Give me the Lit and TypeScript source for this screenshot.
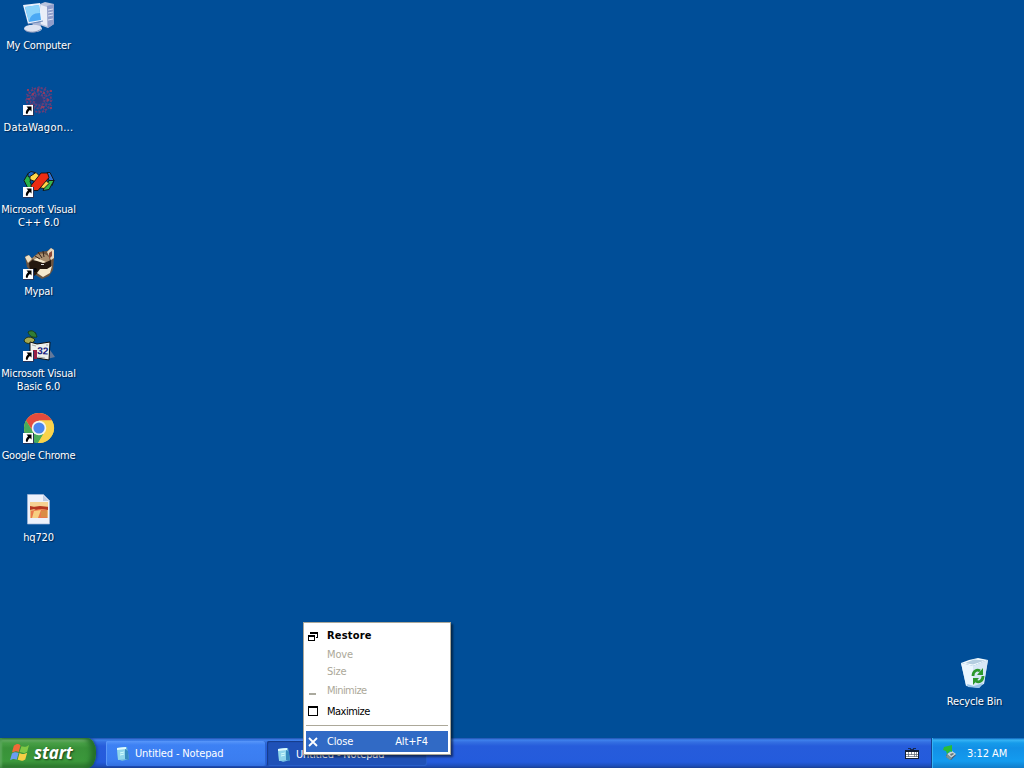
import { LitElement, html, css, svg, nothing } from "lit";
import { customElement, property } from "lit/decorators.js";

const shortcut = svg`<g shape-rendering="crispEdges"><rect x="0" y="21" width="11" height="11" fill="#26345a"/><rect x="0" y="21" width="10" height="10" fill="#fff"/></g><path d="M3.500 22.500h5v5L7 26C5.500 27 4.800 28.200 4.700 29.800H3C2.400 27.500 3.500 25.800 5.100 24.200z" fill="#000"/>`;

const icons: Record<string, unknown> = {
  computer: svg`
    <path d="M17 2l5-2 9 2v20l-6 4-8-3z" fill="#bac4dd"/><path d="M24 4l7-2v20l-6 4z" fill="#909dca"/>
    <path d="M18 3l6 2v19l-6-2z" fill="#e9edf7"/><path d="M25 8l5-1M25 11l5-1M25 14l5-1M25 18l5-1" stroke="#dae1f2"/>
    <path d="M9 21l8-1 1 5-7 1z" fill="#a9b6d6"/><ellipse cx="10" cy="26.500" rx="9" ry="3.800" fill="#dde3f1"/><path d="M2 28c3 3 12 3 16-1" fill="none" stroke="#8693b7"/>
    <path d="M0 3l17-2 3 18-15 3z" fill="#e8f0fc"/><path d="M2 5l14-2 2 15-12 2z" fill="#4ba9f4"/>
    <path d="M2 5l14-2 1 8C10 11 7 14 6 20z" fill="#8bd3fb"/><path d="M5 22l15-3" stroke="#718bb9"/>`,
  wagon: svg`
    <g transform="translate(0 2)"><g fill="none" stroke="#6b3d75" stroke-width="2" stroke-dasharray="2.200 1.200">
      <circle cx="16" cy="14" r="5.500"/><circle cx="16" cy="14" r="8.500"/><circle cx="16" cy="14" r="12"/>
      <path d="M4 4l24 20M28 4L4 24M16 0v28M2 14h28M9 1l14 26M23 1L9 27M3 8l26 12M3 20l26-12" stroke="#57407f" stroke-width="1.200"/>
    </g><circle cx="16" cy="14" r="4" fill="#2b3c80"/>
    <g fill="#8f3c60"><path d="M9 7h2v2H9zM20 6h2v2h-2zM24 13h2v2h-2zM8 18h2v2H8zM18 20h3v2h-3zM5 12h2v2H5zM14 3h2v2h-2zM27 21h2v2h-2zM4 3h2v2H4zM27 4h2v2h-2z"/></g></g>${shortcut}`,
  cpp: svg`
    <g stroke="#111" stroke-width=".9" stroke-linejoin="round" transform="translate(0 1.500)">
      <path d="M1 13l4-7 4 2-2 6 2 5-4 2z" fill="#28b34b"/><path d="M5 6l3-2 4 1-4 5-3-1z" fill="#1b65c7"/>
      <path d="M7 9l6-4 4 4-5 5-5-2z" fill="#ffd64a"/><path d="M24 5l3 0 4 8-2 5-3-5z" fill="#2f72d4"/>
      <path d="M26 13l5 0-5 9-6 1 2-4z" fill="#38b650"/><path d="M18 16l5-3 3 3-5 5-5-1z" fill="#ffd64a"/>
      <path d="M8 18L18 5.500h6.500L26 10 15 23H9z" fill="#ed2c12"/>
    </g>${shortcut}`,
  mypal: svg`
    <path d="M2 9l2-2 5 3 7-6 8-1 4-3 3 2v8l-1 12-4 6-7 3-8-5-7-7z" fill="#6b5440"/>
    <path d="M24 4l4-4 3 2v8l-3 2z" fill="#e5d6bd"/><path d="M26 5l3-2v5l-3 3z" fill="#8d4a38"/>
    <path d="M2 9l4-2 3 4-4 4z" fill="#efdfc2"/><path d="M9 11c4-6 12-8 17-2l1 5-6 1-7-3z" fill="#a98f70"/>
    <path d="M6 15l5-4 5 2 5 2 7-3v7l-6 5-6 0-5 4-4-5z" fill="#24180f"/>
    <path d="M10 12l4-2 9 4-3 1-6-2zM14 25l3-4 7 0 5-3-2 7-7 4z" fill="#f4e8cd"/>
    <path d="M15 4l4 6M20 3l1 6M12 8l5 3" stroke="#34241c"/><circle cx="12" cy="22" r="2" fill="#070707"/><path d="M18 16h3v1h-3z" fill="#ddd"/>${shortcut}`,
  vb: svg`
    <g transform="translate(0 1)"><path d="M9 14C8 8 9 4 13 2" fill="none" stroke="#182c17" stroke-width="1.500"/>
    <path d="M1 10c1-5 8-5 11-1-2 4-8 5-11 1z" fill="#a6a850" stroke="#1e3517"/><path d="M5 1c4-3 8 0 9 5-4 1-8-1-9-5z" fill="#317d35" stroke="#183e1b"/>
    <path d="M24 28l8-2-5-7-2 7z" fill="#64799b"/><path d="M7 11l7 2 13-2-1 18-12-2-7 2z" fill="#eef1ed" stroke="#101010"/>
    <path d="M9 14l4 1M23 14h2M15 26l7 1" stroke="#aaa"/><path d="M10 19h4v9h-4z" fill="#991e45"/>
    <text x="14" y="23" font-family="Liberation Sans" font-size="10" font-weight="bold" fill="#17217e" transform="rotate(4 15 23)">32</text></g>${shortcut}`,
  chrome: svg`
    <g transform="translate(0 1.500)"><circle cx="16" cy="14.500" r="15" fill="#f5d04c"/>
    <path d="M3 7A15 15 0 0 1 29 7H16L10 18z" fill="#e44b3d"/><path d="M3 7A15 15 0 0 0 15 29.500L22 18 10 18z" fill="#48ac5b"/>
    <path d="M16 7h13a15 15 0 0 1-14 22.500L22 18z" fill="#f9d34c"/>
    <circle cx="16" cy="14.500" r="7.300" fill="#f4f5ef"/><circle cx="16" cy="14.500" r="5.600" fill="#4b86ed"/></g>${shortcut}`,
  image: svg`
    <path d="M4.500 .5h16l6 6v23.500h-22z" fill="#edf1fb" stroke="#a1b6d8" stroke-width=".7"/><path d="M20 1v6h6" fill="#bdcce5"/>
    <path d="M7 8h18v16H7z" fill="#e9b777"/><path d="M7 8h18v4H7z" fill="#f6d192"/><path d="M7 12l4 1 6-1 8 1v3l-7-1-3 2-4-2-4 1z" fill="#b63721"/>
    <path d="M8 17l8-2 8 1v8H8z" fill="#e9784c"/><path d="M11 17l7-1-3 8H9z" fill="#f7cf80"/><path d="M18 17l6-1v7h-6z" fill="#da8c47"/>`,
  bin: svg`
    <path d="M2 5l12 3 15-6-4 23-5 5-13-2z" fill="#bed9ec"/><path d="M2 5l12 3 1 21-8-2z" fill="#eaf6fe"/>
    <path d="M14 8L29 2l-4 24-10 3z" fill="#d6e7f5"/>
    <path d="M2 5l8-3 9-2 10 2-15 6z" fill="#f3fbff"/><path d="M6 5l9-3.500 11 1L14 6.500z" fill="#b4cde0"/>
    <g fill="none" stroke="#2c982d" stroke-width="2.800"><path d="M14 18c0-5 4-7 7-5"/><path d="M24 18c0 5-4 7-7 5"/></g>
    <path d="M24 10v7h-6zM14 27v-7h6z" fill="#2c982d"/>
    <path d="M8 26l7 2 9-3-4 5-11-1z" fill="#98c3ea"/>`,
};

const smallIcons: Record<string, unknown> = {
  notepad: svg`<path d="M2 2l10-1 2 12-7 2-4-2z" fill="#6eb8df"/><path d="M2 2l8-1 1 12-8 1z" fill="#90d6ec"/><path d="M2 2l9-1v2L2 4z" fill="#dffaff"/><path d="M10 3l3 2 1 9-4-1z" fill="#368cbf"/><path d="M5 7l4-1M5 9l4-1" stroke="#d4ffff"/>`,
  keyboard: svg`<g shape-rendering="crispEdges"><path d="M4 3h2v1h3V3h3" fill="none" stroke="#162a53"/><path d="M1 5h14v9H1z" fill="#111d36"/><path d="M2 7h12v6H2z" fill="#fff"/><path d="M2 9.500h12M2 11.500h12M4.500 7v5M7.500 7v3M10.500 7v5M12.500 7v5" stroke="#5a6270" stroke-width=".7"/></g>`,
  device: svg`<path d="M5 10l6-3 4 3-5 5-5-3z" fill="#445b76"/><path d="M6 9l5-3 4 3-5 4z" fill="#c9d5d7"/><path d="M9 9l3-1 1 1-3 2z" fill="#61777e"/><path d="M3 2l4-1 4-1v7L9 6 6 9 5 6 2 5z" fill="#29bd36"/><path d="M6 9l5 4-2 2-4-3z" fill="#789391"/>`,
  restore: svg`<g fill="none" stroke="#000" shape-rendering="crispEdges"><path d="M5.500 6V4.500h7v5H11"/><path d="M5 5h8M3 8h7" stroke-width="2"/><path d="M3.500 7.500h6v5h-6z"/></g>`,
  minimize: svg`<path d="M4 11h7v2H4z" fill="#aaa99e"/>`,
  maximize: svg`<path d="M3.500 3.500h9v9h-9z" fill="none" stroke="#000" shape-rendering="crispEdges"/><path d="M3 4h10" stroke="#000" stroke-width="2" shape-rendering="crispEdges"/>`,
  close: svg`<path d="M4 4l8 8M12 4l-8 8" stroke="#fff" stroke-width="1.800"/>`,
  windows: svg`<g transform="translate(0 -1) skewY(-3)"><path d="M3 4c3-2 5-2 7 0L8 11c-2-2-4-1-7 0z" fill="#f06a37"/><path d="M11 5c3 1 5 1 8-1l-2 7c-3 2-5 1-8 0z" fill="#7fc845"/><path d="M1 12c3-2 5-1 7 0l-2 7c-3-2-5-1-7 0z" fill="#6a9df2"/><path d="M9 12c3 2 5 1 8 0l-2 7c-3 2-5 1-8 0z" fill="#f7cf45"/></g>`,
};

@customElement("desktop-item")
class DesktopItem extends LitElement {
  @property() icon = "";
  @property() label = "";
  @property({ type: Number }) spacing = -0.15;
  static styles = css`
    :host { display: flex; flex-direction: column; align-items: center; width: 78px; height: 82px; flex: none; }
    svg { display: block; width: 32px; height: 32px; overflow: visible; margin-left: 1px; flex: none; }
    .label { margin: 5px 0 0 1px; text-align: center; white-space: pre; font: 11px/13px "DejaVu Sans Condensed", "DejaVu Sans", sans-serif; font-stretch: condensed; color: #fff; text-shadow: 1px 1px 1px #00234c; }
  `;
  render() {
    return html`<svg viewBox="0 0 32 32">${icons[this.icon]}</svg><div class="label" style="letter-spacing:${this.spacing}px">${this.label}</div>`;
  }
}

const small = (name: string) => html`<svg class="small" viewBox="0 0 16 16">${smallIcons[name]}</svg>`;

@customElement("app-root")
class AppRoot extends LitElement {
  static styles = css`
    :host { display: block; font: 11px/13px "DejaVu Sans Condensed", "DejaVu Sans", sans-serif; font-stretch: condensed; letter-spacing: -0.150px; }
    * { box-sizing: border-box; }
    .screen { position: relative; width: 1024px; height: 768px; overflow: hidden; background: #004e98; display: flex; flex-direction: column; }
    .desktop { flex: 1; min-height: 0; display: flex; justify-content: space-between; align-items: flex-start; }
    .column { display: flex; flex-direction: column; padding-top: 2px; width: 78px; margin-left: -1px; }
    .recycle { align-self: flex-end; margin-right: 11px; height: 80px; }
    .small { width: 16px; height: 16px; display: block; flex: none; overflow: visible; }
    .taskbar { height: 30px; flex: none; display: flex; align-items: stretch; color: #fff; background: linear-gradient(#1f50ad 0, #3f82ed 2px, #3470e2 4px, #265cdb 8px, #245bdc 24px, #1d4db9 28px, #193f94 30px); }
    .start { width: 96px; display: flex; align-items: center; padding: 0 0 0 11px; gap: 4px; border-radius: 0 9px 9px 0 / 0 14px 14px 0; background: linear-gradient(#2e7430 0, #6eb16b 2px, #48a046 5px, #399139 10px, #3b983b 23px, #2d762e 30px); box-shadow: inset -5px 0 5px #246f29, inset 2px 0 2px #59a65a, 1px 0 3px #164091; }
    .start svg { width: 19px; height: 20px; overflow: visible; }
    .start span { font: italic bold 17px/20px "Open Sans", sans-serif; letter-spacing: -0.100px; text-shadow: 1px 1px 2px #173c17; }
    .tasks { display: flex; gap: 1px; padding: 3px 0 2px 10px; flex: 1; }
    .task { width: 160px; display: flex; align-items: center; gap: 4px; padding: 0 9px; border-radius: 2px; background: linear-gradient(#5897fa, #3d81f4 4px, #3b7df0 20px, #3370e0); box-shadow: inset 1px 0 #5b98f8, inset -1px 0 #2b65ce; }
    .task.active { background: #1f51b7; box-shadow: inset 1px 1px 1px #163b89, inset -1px -1px #285ec8; padding-top: 2px; padding-left: 9px; }
    .keyboard { width: 27px; display: flex; align-items: center; }
    .tray { width: 93px; display: flex; align-items: center; padding: 0 0 0 9px; gap: 10px; border-left: 1px solid #16428f; background: linear-gradient(#0d5fb7 0, #37b4f5 2px, #169bea 5px, #1290e6 10px, #139bef 23px, #107cc9 30px); box-shadow: inset 1px 0 #35b4f4; }
    .tray span { letter-spacing: -0.050px; }
    .menu { position: absolute; left: 303px; top: 622px; width: 148px; height: 133px; padding: 3px 2px; background: #fff; border: 1px solid #aca899; box-shadow: 2px 2px 2px rgba(0, 0, 0, .5); display: flex; flex-direction: column; }
    .entry { display: flex; align-items: center; padding-left: 0; margin-left: -1px; gap: 6px; color: #000; flex: none; }
    .entry .blank { width: 16px; }
    .h17 { height: 17px; } .h18 { height: 18px; } .h19 { height: 19px; } .h20 { height: 20px; } .h22 { height: 22px; }
    .bold { font-weight: bold; }
    .off { color: #aca899; }
    .rule { height: 1px; background: #aca899; margin: 3px 0 5px; flex: none; }
    .selected { height: 21px; color: #fff; background: #316ac5; margin-left: 0; padding-left: 0; gap: 5px; }
    .selected svg { margin-left: -1px; margin-right: 1px; }
    .key { margin-left: auto; padding-right: 20px; }
  `;

  entry(label: string, cls: string, spacing: number, icon = "", key = "") {
    return html`<div class="entry ${cls}">${icon ? small(icon) : html`<span class="blank"></span>`}<span style="letter-spacing:${spacing}px">${label}</span>${key ? html`<span class="key">${key}</span>` : nothing}</div>`;
  }

  render() {
    const items: [string, string, number][] = [
      ["computer", "My Computer", -0.2], ["wagon", "DataWagon...", 0.25], ["cpp", "Microsoft Visual\nC++ 6.0", -0.2], ["mypal", "Mypal", -0.15],
      ["vb", "Microsoft Visual\nBasic 6.0", -0.2], ["chrome", "Google Chrome", -0.25], ["image", "hq720", -0.15],
    ];
    return html`<div class="screen">
      <div class="desktop">
        <div class="column">${items.map(([icon, label, spacing]) => html`<desktop-item .icon=${icon} .label=${label} .spacing=${spacing}></desktop-item>`)}</div>
        <desktop-item class="recycle" .icon=${"bin"} .label=${"Recycle Bin"}></desktop-item>
      </div>
      <div class="taskbar">
        <div class="start"><svg viewBox="0 0 20 21">${smallIcons.windows}</svg><span>start</span></div>
        <div class="tasks">
          <div class="task">${small("notepad")}<span>Untitled - Notepad</span></div>
          <div class="task active">${small("notepad")}<span>Untitled - Notepad</span></div>
        </div>
        <div class="keyboard">${small("keyboard")}</div>
        <div class="tray">${small("device")}<span>3:12 AM</span></div>
      </div>
      <div class="menu">
        ${this.entry("Restore", "bold h19", 0.2, "restore")}
        ${this.entry("Move", "off h18", -0.15)}
        ${this.entry("Size", "off h17", -0.25)}
        ${this.entry("Minimize", "off h20", -0.55, "minimize")}
        ${this.entry("Maximize", "h22", -0.5, "maximize")}
        <div class="rule"></div>
        ${this.entry("Close", "selected", -0.15, "close", "Alt+F4")}
      </div>
    </div>`;
  }
}
